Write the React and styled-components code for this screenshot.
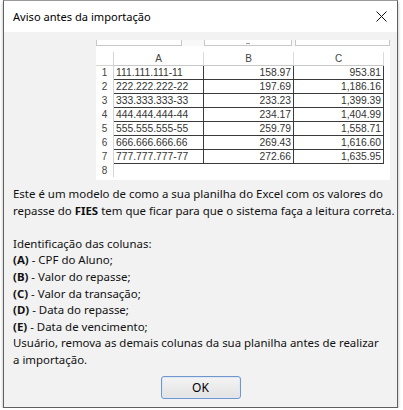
import styled, { createGlobalStyle } from "styled-components";

const Global = createGlobalStyle`
  html, body { margin: 0; padding: 0; background: #ffffff; }
  body { font-family: "Noto Sans", "Open Sans", sans-serif; }
`;

const rows = [
  ["111.111.111-11", "158.97", "953.81"],
  ["222.222.222-22", "197.69", "1,186.16"],
  ["333.333.333-33", "233.23", "1,399.39"],
  ["444.444.444-44", "234.17", "1,404.99"],
  ["555.555.555-55", "259.79", "1,558.71"],
  ["666.666.666.66", "269.43", "1,616.60"],
  ["777.777.777-77", "272.66", "1,635.95"],
];

const columns = [
  ["A", "CPF do Aluno;"],
  ["B", "Valor do repasse;"],
  ["C", "Valor da transação;"],
  ["D", "Data do repasse;"],
  ["E", "Data de vencimento;"],
];

const App = () => {
  return (
    <>
      <Global />
      <Window>
        <TitleBar>
          <Title>Aviso antes da importação</Title>
          <CloseIcon viewBox="0 0 11 11">
            <path d="M0.5 0.5 L10.5 10.5 M10.5 0.5 L0.5 10.5" stroke="#111" strokeWidth="1" fill="none" />
          </CloseIcon>
        </TitleBar>
        <Body>
          <Sheet>
            <FormulaBar>
              <NameBox $w={86} />
              <NameBox $w={87} $gap={22}><Caret /></NameBox>
              <NameBox $w={95} $gap={3} />
            </FormulaBar>
            <Grid>
              <thead>
                <tr>
                  <Corner />
                  <ColHead>A</ColHead>
                  <ColHead>B</ColHead>
                  <ColHead>C</ColHead>
                </tr>
              </thead>
              <tbody>
                {rows.map((r, i) => (
                  <tr key={i}>
                    <RowHead>{i + 1}</RowHead>
                    <Cell>{r[0]}</Cell>
                    <Cell $num>{r[1]}</Cell>
                    <Cell $num>{r[2]}</Cell>
                  </tr>
                ))}
                <tr>
                  <RowHead>8</RowHead>
                  <td colSpan={3} />
                </tr>
              </tbody>
            </Grid>
          </Sheet>
          <Message>
            <p>
              Este é um modelo de como a sua planilha do Excel com os valores do
              <br />
              repasse do <b>FIES</b> tem que ficar para que o sistema faça a leitura correta.
            </p>
            <Spacer />
            <p>Identificação das colunas:</p>
            {columns.map(([k, label]) => (
              <p key={k}>
                <b>({k})</b> - {label}
              </p>
            ))}
            <p>
              Usuário, remova as demais colunas da sua planilha antes de realizar
              <br />
              a importação.
            </p>
          </Message>
          <Footer>
            <OkButton>OK</OkButton>
          </Footer>
        </Body>
      </Window>
    </>
  );
};
export default App;

const Window = styled.div`
  margin-left: 3px;
  width: 395px;
  height: 408px;
  border: 1px solid #5f5f5f;
  border-top-color: #9a9a9a;
  box-sizing: border-box;
  display: flex;
  flex-direction: column;
  background: #f2f2f2;
  box-shadow: 0 2px 3px rgba(0, 0, 0, 0.3);
`;

const TitleBar = styled.div`
  height: 31px;
  background: #ffffff;
  display: flex;
  align-items: center;
  justify-content: space-between;
  padding: 0 10px 0 9px;
  flex-shrink: 0;
`;

const Title = styled.span`
  font-size: 11.1px;
  color: #000;
  margin-top: -1px;
`;

const CloseIcon = styled.svg`
  width: 11px;
  height: 11px;
  margin-top: -1px;
`;

const Body = styled.div`
  flex: 1;
  display: flex;
  flex-direction: column;
  padding-top: 8px;
`;

const Sheet = styled.div`
  margin-left: 92px;
  width: 294px;
  height: 140px;
  background: #ffffff;
  font-family: "Liberation Sans", Arial, sans-serif;
`;

const FormulaBar = styled.div`
  display: flex;
  height: 6px;
  background: #f8f8f8;
  margin-bottom: 6px;
`;

const NameBox = styled.div`
  position: relative;
  width: ${(p) => p.$w}px;
  height: 5px;
  margin-left: ${(p) => p.$gap || 0}px;
  border: 1px solid #c8c8c8;
  border-top: none;
  background: #ffffff;
`;

const Caret = styled.span`
  position: absolute;
  left: 41px;
  bottom: 1px;
  width: 4px;
  height: 1px;
  background: #999;
`;

const Grid = styled.table`
  border-collapse: collapse;
  font-size: 10.3px;
  color: #333;
  td, th { padding: 0; height: 13px; line-height: 13px; }
`;

const Corner = styled.th`
  width: 17px;
  background: #fff;
  border-bottom: 1px solid #d4d4d4;
  border-right: 1px solid #d4d4d4;
`;

const ColHead = styled.th`
  width: 89px;
  font-weight: normal;
  font-size: 10px;
  color: #444;
  border-bottom: 1px solid #c8c8c8;
  border-right: 1px solid #dadada;
`;

const RowHead = styled.td`
  text-align: center;
  font-size: 10px;
  color: #444;
  border-right: 1px solid #d4d4d4;
`;

const Cell = styled.td`
  border: 1px solid #3a3a3a;
  text-align: ${(p) => (p.$num ? "right" : "left")};
  padding: 0 2px !important;
`;

const Message = styled.div`
  margin-top: 6px;
  padding-left: 9px;
  font-size: 11.45px;
  line-height: 16.6px;
  white-space: nowrap;
  color: #111;
  p { margin: 0; }
  b { font-weight: 700; }
`;

const Spacer = styled.div`
  height: 16.6px;
`;

const Footer = styled.div`
  display: flex;
  justify-content: center;
  margin-top: 7px;
`;

const OkButton = styled.button`
  width: 80px;
  height: 23px;
  border: 1px solid #7096cc;
  border-radius: 3px;
  background: linear-gradient(#f4f4f4, #e2e2e2);
  box-shadow: inset 0 0 0 1px #dde8f6;
  font-family: "Noto Sans", sans-serif;
  font-size: 12px;
  color: #000;
  padding: 0;
`;
